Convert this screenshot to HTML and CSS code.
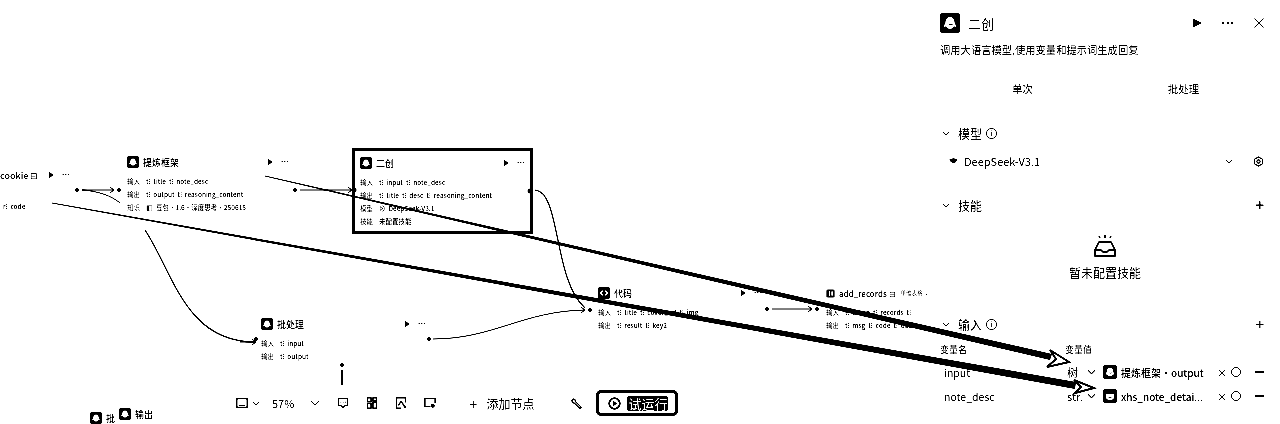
FILE: index.html
```html
<!DOCTYPE html>
<html lang="zh-CN">
<head>
  <meta charset="UTF-8">
  <title>二创</title>
  <link rel="stylesheet" href="styles.css">
</head>
<body>
<div class="app">
  <div class="canvas">
    <!-- 左边被裁掉的节点 -->
    <div class="node n-cookie">
      <div class="node-head"><span class="node-title">cookie ⊟</span><span class="node-act"><i class="play"></i><i class="dots">···</i></span></div>
    </div>
    <div class="node n-code"><div class="node-row">r⁝ code</div></div>

    <div class="node n-frame">
      <div class="node-head"><svg class="logo"><use href="#ghost"/></svg><span class="node-title">提炼框架</span><span class="node-act"><i class="play"></i><i class="dots">···</i></span></div>
      <div class="node-row"><b>输入</b>t⁝ title t⁝ note_desc</div>
      <div class="node-row"><b>输出</b>t⁝ output t⁝ reasoning_content</div>
      <div class="node-row"><b>知识</b>◧ 豆包•1.6•深度思考•250615</div>
    </div>

    <div class="node n-erchuang">
      <div class="node-head"><svg class="logo"><use href="#ghost"/></svg><span class="node-title">二创</span><span class="node-act"><i class="play"></i><i class="dots">···</i></span></div>
      <div class="node-row"><b>输入</b>t⁝ input t⁝ note_desc</div>
      <div class="node-row"><b>输出</b>t⁝ title t⁝ desc t⁝ reasoning_content</div>
      <div class="node-row"><b>模型</b>⊗ DeepSeek-V3.1</div>
      <div class="node-row"><b>技能</b>未配置技能</div>
    </div>

    <div class="node n-code2">
      <div class="node-head"><svg class="logo"><use href="#code"/></svg><span class="node-title">代码</span><span class="node-act"><i class="play"></i><i class="dots">···</i></span></div>
      <div class="node-row"><b>输入</b>t⁝ title t⁝ cover_url t⁝ img</div>
      <div class="node-row"><b>输出</b>t⁝ result t⁝ key2</div>
    </div>

    <div class="node n-records">
      <div class="node-head"><svg class="logo small"><use href="#book"/></svg><span class="node-title">add_records ⊟</span><span class="node-note">单维表格 ⌄</span></div>
      <div class="node-row"><b>输入</b>t⁝ token t⁝ records t⁝</div>
      <div class="node-row"><b>输出</b>t⁝ msg t⁝ code t⁝ data</div>
    </div>

    <div class="node n-batch">
      <div class="node-head"><svg class="logo"><use href="#ghost"/></svg><span class="node-title">批处理</span><span class="node-act"><i class="play"></i><i class="dots">···</i></span></div>
      <div class="node-row"><b>输入</b>t⁝ input</div>
      <div class="node-row"><b>输出</b>t⁝ output</div>
    </div>

    <div class="node n-pi">
      <div class="node-head"><svg class="logo"><use href="#ghost"/></svg><span class="node-title">批</span></div>
    </div>
    <div class="node n-out">
      <div class="node-head"><svg class="logo"><use href="#ghost"/></svg><span class="node-title">输出</span></div>
    </div>

    <div class="toolbar">
      <svg class="ti" viewBox="0 0 14 12"><rect x="1" y="1" width="12" height="10" fill="none" stroke="#000" stroke-width="1.4"/><path d="M3 9h8" stroke="#000"/></svg>
      <svg class="chev" viewBox="0 0 10 6"><path d="M1 1l4 4 4-4" fill="none" stroke="#000" stroke-width="1.2"/></svg>
      <span class="zoom-val">57%</span>
      <svg class="chev wide" viewBox="0 0 10 6"><path d="M1 1l4 4 4-4" fill="none" stroke="#000" stroke-width="1"/></svg>
      <svg class="ti" viewBox="0 0 14 13"><path d="M1.5 1.5h11v8h-3l-2.5 2.500-2.500-2.500h-3z" fill="none" stroke="#000" stroke-width="1.400"/><path d="M4 5.500h1.200M6.500 5.500h1.200M9 5.500h1.200" stroke="#000" stroke-width="1.400"/></svg>
      <svg class="ti" viewBox="0 0 12 13"><path d="M1 1h4v4H1zM7 1h4v3H7zM7 6h4v6H7zM1 7h4v5H1z" fill="none" stroke="#000" stroke-width="1.500"/></svg>
      <svg class="ti" viewBox="0 0 12 13"><path d="M11 6V1H1v11h5" fill="none" stroke="#000" stroke-width="1.500"/><path d="M3 9l3-4 5 6M8 8l3 4" fill="none" stroke="#000" stroke-width="1.500"/></svg>
      <svg class="ti" viewBox="0 0 13 12"><path d="M7 10H1V1h11v5" fill="none" stroke="#000" stroke-width="1.400"/><circle cx="9.500" cy="9" r="2.200"/></svg>
      <span class="plus">+</span>
      <span class="add-label">添加节点</span>
      <svg class="ti wrench" viewBox="0 0 12 12"><path d="M1 2.500L2.500 1l2 1 .5 2 6 6-1.500 1.500-6-6-2-.5z" fill="none" stroke="#000" stroke-width="1.400"/></svg>
      <div class="run-btn">
        <svg class="run-ic" viewBox="0 0 13 13"><circle cx="6.500" cy="6.500" r="5.300" fill="none" stroke="#000" stroke-width="1.800"/><path d="M5 3.500l4 3-4 3z"/></svg>
        <span class="run-label">试运行</span>
      </div>
    </div>
  </div>

  <aside class="panel">
    <div class="panel-head">
      <svg class="panel-logo"><use href="#ghost"/></svg>
      <span class="panel-title">二创</span>
      <svg class="play-lg" viewBox="0 0 10 10"><path d="M0 0l10 5-10 5z"/></svg>
      <span class="panel-dots">···</span>
      <svg class="close" viewBox="0 0 10 10"><path d="M.5 .5l9 9M9.500 .5l-9 9" stroke="#000" stroke-width="1"/></svg>
    </div>
    <p class="panel-desc">调用大语言模型,使用变量和提示词生成回复</p>
    <div class="tabs"><span>单次</span><span>批处理</span></div>

    <div class="sec sec-model">
      <svg class="chev" viewBox="0 0 10 6"><path d="M1 1l4 4 4-4" fill="none" stroke="#000" stroke-width="1"/></svg>
      <span class="sec-title">模型</span><span class="info">i</span>
    </div>
    <div class="model-row">
      <svg class="model-ic" viewBox="0 0 11 9"><path d="M1 2c2 4 5 5 8 3l1-3c-2 0-2-1-4-1S3 3 1 2z"/></svg>
      <span class="model-name">DeepSeek-V3.1</span>
      <svg class="chev" viewBox="0 0 10 6"><path d="M1 1l4 4 4-4" fill="none" stroke="#000" stroke-width="1"/></svg>
      <svg class="gear" viewBox="0 0 12 12"><path d="M6 1l4.500 2.500v5L6 11 1.500 8.500v-5z" fill="none" stroke="#000" stroke-width="1.200"/><circle cx="6" cy="6" r="1.800" fill="none" stroke="#000" stroke-width="1.200"/></svg>
    </div>

    <div class="sec sec-skill">
      <svg class="chev" viewBox="0 0 10 6"><path d="M1 1l4 4 4-4" fill="none" stroke="#000" stroke-width="1"/></svg>
      <span class="sec-title">技能</span><span class="sec-plus">+</span>
    </div>
    <div class="empty">
      <svg class="empty-ic" viewBox="0 0 24 24"><path d="M6 2l1 2M12 1v3M18 2l-1 2" stroke="#000" stroke-width="1.600"/><path d="M6 8h12l4 8v6H2v-6z M2 16h6l2 2h4l2-2h6" fill="none" stroke="#000" stroke-width="1.600"/></svg>
      <span>暂未配置技能</span>
    </div>

    <div class="sec sec-input">
      <svg class="chev" viewBox="0 0 10 6"><path d="M1 1l4 4 4-4" fill="none" stroke="#000" stroke-width="1"/></svg>
      <span class="sec-title">输入</span><span class="info">i</span><span class="sec-plus thin">+</span>
    </div>
    <div class="var-head"><span>变量名</span><span>变量值</span></div>
    <div class="var-row">
      <span class="var-name">input</span><span class="var-type">树</span>
      <svg class="chev" viewBox="0 0 10 6"><path d="M1 1l4 4 4-4" fill="none" stroke="#000" stroke-width="1.200"/></svg>
      <svg class="var-logo"><use href="#ghost"/></svg>
      <span class="var-val">提炼框架·output</span>
      <span class="var-x">×</span><span class="var-ring"></span><span class="var-minus"></span>
    </div>
    <div class="var-row">
      <span class="var-name">note_desc</span><span class="var-type">str.</span>
      <svg class="chev" viewBox="0 0 10 6"><path d="M1 1l4 4 4-4" fill="none" stroke="#000" stroke-width="1.200"/></svg>
      <svg class="var-logo"><use href="#clock"/></svg>
      <span class="var-val">xhs_note_detai...</span>
      <span class="var-x">×</span><span class="var-ring"></span><span class="var-minus"></span>
    </div>
  </aside>

  <!-- 连线 盖在节点和面板上面 -->
  <svg class="edges" viewBox="0 0 1280 424">
    <g fill="none" stroke="#000" stroke-width="1">
      <path d="M82 190h32M110 187l4 3-4 3"/>
      <path d="M82 190c16 1 30 6 38 13"/>
      <path d="M145 230c28 42 40 112 110 112" stroke-width="1.200"/>
      <path d="M300 190h52M348 187l4 3-4 3"/>
      <path d="M535 190c26 2 18 90 50 118" stroke-width="1.200"/>
      <path d="M433 339c60 0 90-28 152-29M581 307l4 3-4 3"/>
      <path d="M772 309h40M808 306l4 3-4 3"/>
      <path d="M342 370v15" stroke-width="1.600"/>
      <path d="M240 342h16M252 339l4 3-4 3"/>
    </g>
    <g>
      <circle cx="77" cy="190" r="2"/><circle cx="119" cy="190" r="2"/>
      <circle cx="295" cy="190" r="2"/><circle cx="354" cy="190" r="2.500"/>
      <circle cx="530" cy="191" r="2.500"/><circle cx="590" cy="310" r="2"/>
      <circle cx="767" cy="309" r="2"/><circle cx="817" cy="309" r="2"/>
      <circle cx="256" cy="339" r="2"/><circle cx="429" cy="339" r="2"/>
      <circle cx="342" cy="365" r="2"/>
    </g>
    <!-- 两条越来越粗的手绘箭头 -->
    <polygon points="265,175.500 265,176.500 1050,360 1052,354"/>
    <polygon points="52,202.500 52,203.500 1075,389 1076,382"/>
    <polygon points="1050,350 1069,362 1047,367 1056,359" fill="#fff" stroke="#000" stroke-width="2"/>
    <polygon points="1074,380 1094,388 1075,393 1081,387" fill="#fff" stroke="#000" stroke-width="2"/>
  </svg>

  <svg class="defs" width="0" height="0">
    <symbol id="ghost" viewBox="0 0 20 20">
      <rect width="20" height="20" rx="3"/>
      <path d="M10 4c3 0 4.500 2.500 4.500 5 0 1.500 1.500 3 2 4.500-1 .5-2 0-2.500 0-1 1.500-2.500 2.500-4 2.500S7 15 6 13.500c-.5 0-1.500.5-2.500 0C4 12 5.500 10.500 5.500 9 5.500 6.500 7 4 10 4z" fill="#fff"/>
      <path d="M9 11c1 1 2.500 1 3.500-.2" fill="none" stroke="#000" stroke-width="1.200"/>
    </symbol>
    <symbol id="clock" viewBox="0 0 20 20">
      <rect width="20" height="20" rx="4"/>
      <path d="M4 7h12v4c0 3-3 5-6 5s-6-2-6-5z" fill="#fff"/>
      <path d="M7 11c1 1.500 5 1.500 6 0" stroke="#000" fill="none"/>
    </symbol>
    <symbol id="code" viewBox="0 0 20 20">
      <rect width="20" height="20" rx="3"/>
      <path d="M8 6l-4 4 4 4M12 6l4 4-4 4" fill="none" stroke="#fff" stroke-width="2"/>
    </symbol>
    <symbol id="book" viewBox="0 0 20 20">
      <rect x="1" y="1" width="18" height="18" rx="3"/>
      <rect x="6" y="5" width="3" height="10" fill="#fff"/>
      <rect x="12" y="5" width="3" height="10" fill="#fff"/>
    </symbol>
  </svg>
</div>
</body>
</html>
```

FILE: styles.css
```css
html,
body {
      margin: 0;
      height: 100%;
      overflow: hidden;
      background: #fff;
}

body {
      color: #000;
      font: 11px "Noto Sans CJK SC", "Noto Sans", sans-serif;
}

.app {
      position: relative;
      display: flex;
      width: 1280px;
      height: 424px;
      overflow: hidden;
      background: #fff;
      filter: grayscale(1) contrast(3);
}

.canvas {
      position: relative;
      flex: 1;
}

/* 画布上的节点 */
.node {
      position: absolute;
      box-sizing: border-box;
}

.node-head {
      display: flex;
      align-items: center;
      height: 12px;
}

.logo {
      flex: none;
      width: 12px;
      height: 12px;
      margin-right: 4px;
}

.logo.small {
      width: 9px;
      height: 9px;
}

.node-title {
      font-size: 9px;
      font-weight: 500;
      white-space: nowrap;
}

.node-act {
      display: flex;
      align-items: center;
      margin-left: auto;
      gap: 8px;
}

.node-act i {
      font-style: normal;
}

.play {
      width: 0;
      height: 0;
      border-left: 5px solid #000;
      border-top: 3px solid transparent;
      border-bottom: 3px solid transparent;
}

.dots {
      font-family: "Liberation Sans", sans-serif;
      font-size: 8px;
      line-height: 8px;
      font-weight: 700;
}

.node-row {
      height: 13px;
      font-size: 6.500px;
      font-weight: 500;
      line-height: 13px;
      word-spacing: 1.500px;
      white-space: nowrap;
}

.node-row b {
      margin-right: 6px;
      font-weight: 400;
}

.node-head + .node-row {
      margin-top: 7px;
}

.n-cookie { left: 0; top: 169px; width: 70px; }
.n-code { left: 3px; top: 200px; }
.n-frame { left: 127px; top: 156px; width: 162px; }
.n-erchuang {
      left: 352px;
      top: 148px;
      width: 181px;
      height: 86px;
      padding: 6px 5px 0 5px;
      border: 3px solid #000;
}
.n-code2 { left: 598px; top: 287px; width: 164px; }
.n-records { left: 826px; top: 287px; width: 104px; overflow: hidden; }
.n-records .node-title { font-size: 8px; }
.node-note { margin-left: 5px; font-size: 5.500px; white-space: nowrap; }
.n-batch { left: 261px; top: 318px; width: 165px; }
.n-pi { left: 90px; top: 412px; }
.n-out { left: 119px; top: 408px; }

/* 底部工具条 */
.toolbar {
      position: absolute;
      left: 236px;
      top: 390px;
      display: flex;
      align-items: center;
      height: 26px;
}

.ti {
      flex: none;
      width: 12px;
      height: 12px;
      margin-right: 17px;
}

.toolbar .ti:first-child {
      margin-right: 4px;
}

.chev {
      flex: none;
      width: 8px;
      height: 5px;
}

.zoom-val {
      margin-left: 12px;
      font-size: 11px;
}

.chev.wide {
      width: 10px;
      height: 6px;
      margin: 0 17px 0 16px;
}

.plus {
      margin-left: 16px;
      font-size: 15px;
      font-weight: 300;
}

.add-label {
      margin-left: 9px;
      font-size: 12px;
}

.wrench {
      width: 11px;
      height: 11px;
      margin: 0 14px 0 37px;
}

.run-btn {
      display: flex;
      align-items: center;
      box-sizing: border-box;
      width: 82px;
      height: 26px;
      padding-left: 9px;
      border: 3px solid #000;
      border-radius: 5px;
}

.run-ic {
      width: 13px;
      height: 13px;
}

.run-label {
      margin-left: 6px;
      padding: 0 1px;
      border-radius: 2px;
      background: #000;
      color: #fff;
      font-size: 13px;
      line-height: 15px;
}

/* 右边配置面板 */
.panel {
      flex: none;
      box-sizing: border-box;
      width: 350px;
      padding: 13px 16px 0 10px;
}

.panel-head {
      display: flex;
      align-items: center;
      height: 20px;
}

.panel-logo {
      width: 20px;
      height: 20px;
      margin-right: 8px;
}

.panel-title {
      font-size: 13px;
}

.play-lg {
      width: 9px;
      height: 10px;
      margin-left: auto;
}

.panel-dots {
      margin-left: 19px;
      font-family: "Liberation Sans", sans-serif;
      font-size: 14px;
      font-weight: 700;
      line-height: 12px;
}

.close {
      width: 10px;
      height: 10px;
      margin-left: 19px;
}

.panel-desc {
      margin: 8px 0 0;
      font-size: 10.300px;
      line-height: 17px;
}

.tabs {
      display: flex;
      margin: 23px 0 0 2px;
      font-size: 10.500px;
      line-height: 16px;
}

.tabs span {
      width: 166px;
      text-align: center;
}

.sec {
      display: flex;
      align-items: center;
      height: 16px;
      padding-left: 2px;
}

.sec .chev {
      margin-right: 8px;
}

.sec-title {
      font-size: 12px;
}

.info {
      width: 9px;
      height: 9px;
      margin-left: 4px;
      border: 1px solid #000;
      border-radius: 50%;
      font-size: 7px;
      line-height: 9px;
      text-align: center;
}

.sec-plus {
      margin-left: auto;
      font-size: 15px;
      font-weight: 700;
      line-height: 16px;
}

.sec-plus.thin {
      font-weight: 400;
}

.sec-model { margin-top: 28px; }
.sec-skill { margin-top: 28px; }
.sec-input { margin-top: 35px; }

.model-row {
      display: flex;
      align-items: center;
      height: 16px;
      margin-top: 12px;
      padding-left: 8px;
}

.model-ic {
      width: 10px;
      height: 9px;
      margin-right: 6px;
}

.model-name {
      flex: 1;
      font-size: 11px;
}

.model-row .chev {
      margin-right: 20px;
}

.gear {
      width: 11px;
      height: 11px;
}

.empty {
      display: flex;
      flex-direction: column;
      align-items: center;
      margin: 21px 0 0 6px;
      font-size: 12px;
}

.empty-ic {
      width: 24px;
      height: 24px;
      margin-bottom: 6px;
}

.var-head {
      display: flex;
      margin-top: 12px;
      font-size: 9px;
      line-height: 12px;
}

.var-head span:first-child {
      width: 125px;
}

.var-row {
      display: flex;
      align-items: center;
      height: 24px;
}

.var-head + .var-row {
      margin-top: 4px;
}

.var-name {
      flex: none;
      width: 127px;
      padding-left: 4px;
      font-size: 10.500px;
      box-sizing: border-box;
}

.var-type {
      flex: none;
      width: 20px;
      font-size: 11px;
}

.var-row .chev {
      width: 9px;
      height: 6px;
      margin-right: 7px;
}

.var-logo {
      flex: none;
      width: 14px;
      height: 14px;
      margin-right: 4px;
}

.var-val {
      flex: none;
      width: 96px;
      font-size: 10px;
      font-weight: 500;
      white-space: nowrap;
}

.var-x {
      flex: none;
      width: 10px;
      font-size: 10px;
}

.var-ring {
      flex: none;
      width: 8px;
      height: 8px;
      margin-left: 4px;
      border: 1.500px solid #000;
      border-radius: 50%;
}

.var-minus {
      flex: none;
      width: 9px;
      height: 2px;
      margin-left: 14px;
      background: #000;
}

/* 连线层 */
.edges {
      position: absolute;
      left: 0;
      top: 0;
      width: 1280px;
      height: 424px;
      pointer-events: none;
}

.defs {
      position: absolute;
}
```
